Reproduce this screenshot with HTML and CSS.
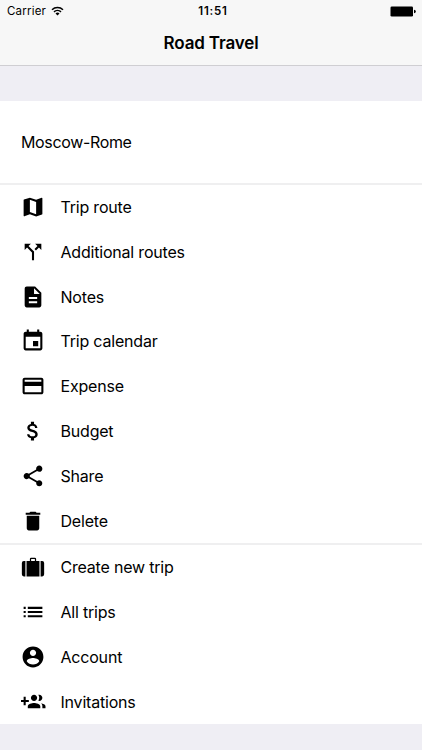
FILE: index.html
```html
<!DOCTYPE html>
<html lang="en">
<head>
  <meta charset="UTF-8">
  <meta name="viewport" content="width=device-width, initial-scale=1.0">
  <title>Road Travel</title>
  <link rel="stylesheet" href="styles.css">
</head>
<body>

<header>
  <div class="status-bar">
    <div class="carrier">
      <span>Carrier</span>
      <svg class="wifi" viewBox="0 0 13 10">
        <path d="M1 3.7a7.8 7.8 0 0 1 11 0M3 5.9a5 5 0 0 1 7 0" fill="none" stroke="#000" stroke-width="1.5"/>
        <path d="M6.5 9.5L4.5 7.5a2.9 2.9 0 0 1 4 0z"/>
      </svg>
    </div>
    <div class="time">11:51</div>
    <svg class="battery" viewBox="0 0 26 11">
      <rect x="0.5" y="0.5" width="22.500" height="10" rx="1.3"/>
      <path d="M24 3.7a1.8 1.8 0 0 1 0 3.6z"/>
    </svg>
  </div>
  <h1>Road Travel</h1>
</header>

<main>
  <div class="trip-name">Moscow-Rome</div>

  <ul class="menu">
    <li>
      <svg viewBox="0 0 24 24"><path d="M20.5 3l-.16.03L15 5.1 9 3 3.36 4.9c-.21.07-.36.25-.36.48V20.500c0 .28.22.5.5.5l.16-.03L9 18.9l6 2.1 5.640-1.9c.21-.07.36-.25.36-.48V3.500c0-.28-.22-.5-.5-.5zM15 19l-6-2.110V5l6 2.110V19z"/></svg>
      <span>Trip route</span>
    </li>
    <li>
      <svg viewBox="0 0 24 24"><path d="M14 4l2.290 2.290-2.880 2.880 1.420 1.420 2.880-2.880L20 10V4h-6zM10 4H4v6l2.290-2.290 4.710 4.700V20h2v-8.410l-5.290-5.300L10 4z"/></svg>
      <span>Additional routes</span>
    </li>
    <li>
      <svg viewBox="0 0 24 24"><path d="M14 2H6c-1.100 0-1.990.9-1.990 2L4 20c0 1.100.89 2 1.990 2H18c1.100 0 2-.9 2-2V8l-6-6zm2 16H8v-2h8v2zm0-4H8v-2h8v2zm-3-5V3.500L18.500 9H13z"/></svg>
      <span>Notes</span>
    </li>
    <li>
      <svg viewBox="0 0 24 24"><path d="M17 12h-5v5h5v-5zM16 1v2H8V1H6v2H5c-1.110 0-1.990.9-1.990 2L3 19c0 1.100.89 2 2 2h14c1.100 0 2-.9 2-2V5c0-1.100-.9-2-2-2h-1V1h-2zm3 18H5V8h14v11z"/></svg>
      <span>Trip calendar</span>
    </li>
    <li>
      <svg viewBox="0 0 24 24"><path d="M20 4H4c-1.110 0-1.990.89-1.990 2L2 18c0 1.110.89 2 2 2h16c1.110 0 2-.89 2-2V6c0-1.110-.89-2-2-2zm0 14H4v-6h16v6zm0-10H4V6h16v2z"/></svg>
      <span>Expense</span>
    </li>
    <li>
      <svg viewBox="0 0 24 24"><path d="M11.800 10.900c-2.270-.59-3-1.200-3-2.150 0-1.090 1.010-1.850 2.700-1.850 1.780 0 2.440.85 2.500 2.100h2.210c-.07-1.720-1.120-3.300-3.210-3.810V3h-3v2.160c-1.940.42-3.500 1.680-3.500 3.610 0 2.310 1.910 3.460 4.700 4.130 2.500.6 3 1.480 3 2.410 0 .69-.49 1.790-2.700 1.790-2.060 0-2.870-.92-2.980-2.100h-2.200c.12 2.190 1.760 3.420 3.680 3.830V21h3v-2.150c1.950-.37 3.500-1.500 3.500-3.550 0-2.840-2.430-3.810-4.700-4.400z"/></svg>
      <span>Budget</span>
    </li>
    <li>
      <svg viewBox="0 0 24 24"><path d="M18 16.080c-.76 0-1.440.3-1.960.77L8.910 12.700c.05-.23.09-.46.09-.7s-.04-.47-.09-.7l7.050-4.110c.54.5 1.250.81 2.040.81 1.660 0 3-1.340 3-3s-1.340-3-3-3-3 1.340-3 3c0 .24.04.47.09.7L8.040 9.810C7.500 9.310 6.790 9 6 9c-1.660 0-3 1.340-3 3s1.340 3 3 3c.79 0 1.500-.31 2.040-.81l7.120 4.160c-.05.21-.08.43-.08.65 0 1.610 1.310 2.920 2.920 2.920s2.920-1.310 2.920-2.920-1.310-2.920-2.920-2.920z"/></svg>
      <span>Share</span>
    </li>
    <li>
      <svg viewBox="0 0 24 24"><path d="M6 19c0 1.100.9 2 2 2h8c1.100 0 2-.9 2-2V7H6v12zM19 4h-3.500l-1-1h-5l-1 1H5v2h14V4z"/></svg>
      <span>Delete</span>
    </li>
  </ul>

  <ul class="menu">
    <li>
      <svg viewBox="0 0 24 24">
        <path d="M5.800 6.200H9V4.200Q9 3 10.200 3H13.800Q15 3 15 4.200V6.200H18.200V21H5.800zM10.200 6.200H13.800V4.200H10.200z" fill-rule="evenodd"/>
        <path d="M4.700 6.200V21H3.200Q1.300 21 1.300 19V8.200Q1.300 6.200 3.200 6.200zM19.300 6.200V21H20.800Q22.700 21 22.700 19V8.200Q22.700 6.200 20.800 6.200z"/>
      </svg>
      <span>Create new trip</span>
    </li>
    <li>
      <svg viewBox="0 0 24 24"><path d="M3 13h2v-2H3v2zm0 4h2v-2H3v2zm0-8h2V7H3v2zm4 4h14v-2H7v2zm0 4h14v-2H7v2zM7 7v2h14V7H7z"/></svg>
      <span>All trips</span>
    </li>
    <li>
      <svg viewBox="0 0 24 24"><path d="M12 2C6.480 2 2 6.480 2 12s4.480 10 10 10 10-4.480 10-10S17.520 2 12 2zm0 3c1.660 0 3 1.340 3 3s-1.340 3-3 3-3-1.340-3-3 1.340-3 3-3zm0 14.200c-2.500 0-4.710-1.280-6-3.220.03-1.990 4-3.080 6-3.080 1.990 0 5.970 1.090 6 3.080-1.290 1.940-3.500 3.220-6 3.220z"/></svg>
      <span>Account</span>
    </li>
    <li>
      <svg viewBox="0 0 24 24"><path d="M8 10H5V7H3v3H0v2h3v3h2v-3h3v-2zm10 1c1.660 0 2.990-1.340 2.990-3S19.660 5 18 5c-.32 0-.63.05-.91.14.57.81.9 1.790.9 2.860s-.34 2.040-.9 2.860c.28.09.59.14.91.14zm-5 0c1.660 0 2.990-1.340 2.990-3S14.660 5 13 5s-3 1.340-3 3 1.340 3 3 3zm6.620 2.160c.83.73 1.380 1.660 1.380 2.840v2h3v-2c0-1.540-2.370-2.490-4.380-2.840zM13 13c-2 0-6 1-6 3v2h12v-2c0-2-4-3-6-3z"/></svg>
      <span>Invitations</span>
    </li>
  </ul>
</main>

</body>
</html>
```
FILE: styles.css
```css
body {
  font-family: Inter, "Liberation Sans", sans-serif;
  background-color: #efeef4;
  color: #000;
  margin: 0;
  padding: 0;
}

header {
  height: 65px;
  background-color: #f7f7f7;
  border-bottom: 1px solid #cfced2;
}

.status-bar {
  display: grid;
  grid-template-columns: 1fr auto 1fr;
  align-items: center;
  height: 22px;
  padding: 0 6px 0 7px;
  font-size: 11.5px;
}

.carrier {
  display: flex;
  align-items: center;
  gap: 5px;
  letter-spacing: 0.2px;
}

.wifi {
  width: 13px;
  height: 10px;
}

.time {
  padding-left: 3px;
  font-weight: 600;
  letter-spacing: 0.8px;
}

.battery {
  width: 26px;
  height: 11px;
  justify-self: end;
}

h1 {
  margin: 0;
  font-size: 17px;
  font-weight: 600;
  line-height: 43px;
  letter-spacing: -0.15px;
  text-align: center;
}

main {
  margin-top: 35px;
  background-color: #fff;
}

.trip-name {
  height: 81.6px;
  padding-left: 21px;
  font-size: 16px;
  letter-spacing: -0.35px;
  line-height: 82px;
}

.menu {
  list-style: none;
  margin: 0;
  padding: 0;
  border-top: 2px solid #efeff0;
}

.menu li {
  display: flex;
  align-items: center;
  gap: 14.5px;
  height: 44.8px;
  padding-left: 20px;
  font-size: 16px;
  letter-spacing: -0.2px;
}

.menu svg {
  width: 26px;
  height: 26px;
  padding: 0.5px;
  box-sizing: border-box;
}
```
